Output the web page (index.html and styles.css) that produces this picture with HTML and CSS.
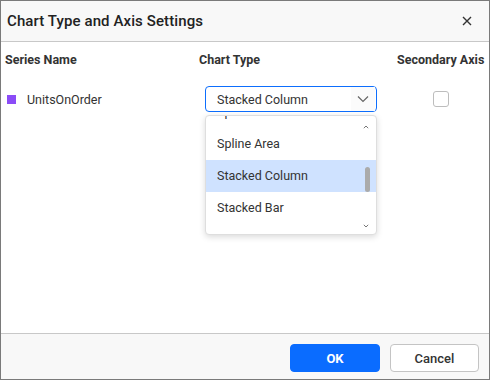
FILE: index.html
```html
<!DOCTYPE html>
<html>
<head>
<meta charset="utf-8">
<link rel="stylesheet" href="styles.css">
</head>
<body>
<div class="dialog">
  <div class="header">
    <span class="title">Chart Type and Axis Settings</span>
    <svg class="close" width="10" height="10" viewBox="0 0 10 10"><path d="M1 1 L9 9 M9 1 L1 9" stroke="#333" stroke-width="1.4" fill="none"/></svg>
  </div>
  <div class="content">
    <div class="grid">
      <div class="colhead">Series Name</div>
      <div class="colhead">Chart Type</div>
      <div class="colhead right">Secondary Axis</div>

      <div class="series"><span class="swatch"></span><span>UnitsOnOrder</span></div>
      <div class="typecell">
        <div class="select">
          <span>Stacked Column</span>
          <span class="chev"><svg width="12" height="8" viewBox="0 0 12 8"><path d="M1 1.5 L6 6.5 L11 1.5" stroke="#666" stroke-width="1.2" fill="none"/></svg></span>
        </div>
        <div class="popup">
          <ul class="list">
            <li>Spline</li>
            <li>Spline Area</li>
            <li class="sel">Stacked Column</li>
            <li>Stacked Bar</li>
          </ul>
          <svg class="arrow up" width="6" height="4" viewBox="0 0 6 4"><path d="M0.8 3.2 L3 1 L5.2 3.2" stroke="#777" stroke-width="1" fill="none"/></svg>
          <span class="thumb"></span>
          <svg class="arrow down" width="6" height="4" viewBox="0 0 6 4"><path d="M0.8 0.8 L3 3 L5.2 0.8" stroke="#777" stroke-width="1" fill="none"/></svg>
        </div>
      </div>
      <div class="checkcell"><span class="checkbox"></span></div>
    </div>
  </div>
  <div class="footer">
    <button class="btn ok">OK</button>
    <button class="btn cancel">Cancel</button>
  </div>
</div>
</body>
</html>
```
FILE: styles.css
```css
* { box-sizing: border-box; }
html, body { margin: 0; padding: 0; }
body { font-family: Roboto, "Liberation Sans", sans-serif; color: #333; background: #fff; }
.dialog {
  width: 490px; height: 380px;
  border: 1px solid #7a7a7a;
  display: flex; flex-direction: column;
  background: #fff;
}
.header {
  height: 41px;
  background: #f8f8f8;
  border-bottom: 1px solid #c8c8c8;
  display: flex; align-items: center; justify-content: space-between;
  padding: 0 17px 0 6px;
  flex: none;
}
.title { font-size: 15px; font-weight: 500; color: #222; letter-spacing: 0.1px; }
.close { display: block; margin-top: -1px; }
.content { flex: 1; padding: 9px 4px 0 4px; }
.grid {
  display: grid;
  grid-template-columns: 194px 198px 87px;
  grid-template-rows: 16px 64px;
  align-items: center;
}
.colhead { font-size: 12.5px; font-weight: 700; color: #333; }
.colhead.right { text-align: right; white-space: nowrap; }
.series { display: flex; align-items: center; font-size: 12.5px; padding-left: 2px; color: #333; }
.swatch { width: 9px; height: 9px; background: #8b4cf7; margin-right: 11px; }
.typecell { position: relative; padding-left: 6px; }
.select {
  width: 172px; height: 26px;
  border: 1px solid #0d6efd; border-radius: 4px;
  display: flex; align-items: center; justify-content: space-between;
  padding-left: 11px; font-size: 12.5px; color: #333;
}
.chev { width: 24px; height: 24px; display: flex; align-items: center; justify-content: center; margin-right: 1px; background: #fbfbfb; }
.chev svg { display: block; }
.popup {
  position: absolute; left: 6px; top: 29px;
  width: 172px; height: 120px;
  background: #fff;
  border: 1px solid #dedede; border-radius: 4px;
  box-shadow: 0 2px 6px rgba(0,0,0,0.15);
  overflow: hidden;
}
.list { list-style: none; margin: -20px 0 0 0; padding: 0; }
.list li { height: 32px; line-height: 32px; padding-left: 11px; font-size: 12.5px; color: #333; }
.list li.sel { background: #cfe2ff; }
.arrow { position: absolute; right: 7px; display: block; }
.arrow.up { top: 9px; }
.arrow.down { bottom: 6px; }
.thumb { position: absolute; right: 6px; top: 51px; width: 5px; height: 25px; background: #ababab; border-radius: 3px; }
.checkcell { display: flex; justify-content: center; padding-left: 1px; }
.checkbox { width: 16px; height: 16px; border: 1px solid #bdbdbd; border-radius: 3px; background: #fff; }
.footer {
  height: 46px; flex: none;
  background: #f8f8f8;
  border-top: 1px solid #c8c8c8;
  display: flex; justify-content: flex-end; align-items: flex-start;
  padding: 10px 10px 0 0; gap: 10px;
}
.btn { height: 28px; border-radius: 4px; font-family: Roboto, "Liberation Sans", sans-serif; font-size: 13px; cursor: pointer; }
.ok { width: 90px; background: #0a6cff; border: 1px solid #0a6cff; color: #fff; font-weight: 700; }
.cancel { width: 89px; background: #fff; border: 1px solid #c4c4c4; color: #333; font-weight: 500; }
```
